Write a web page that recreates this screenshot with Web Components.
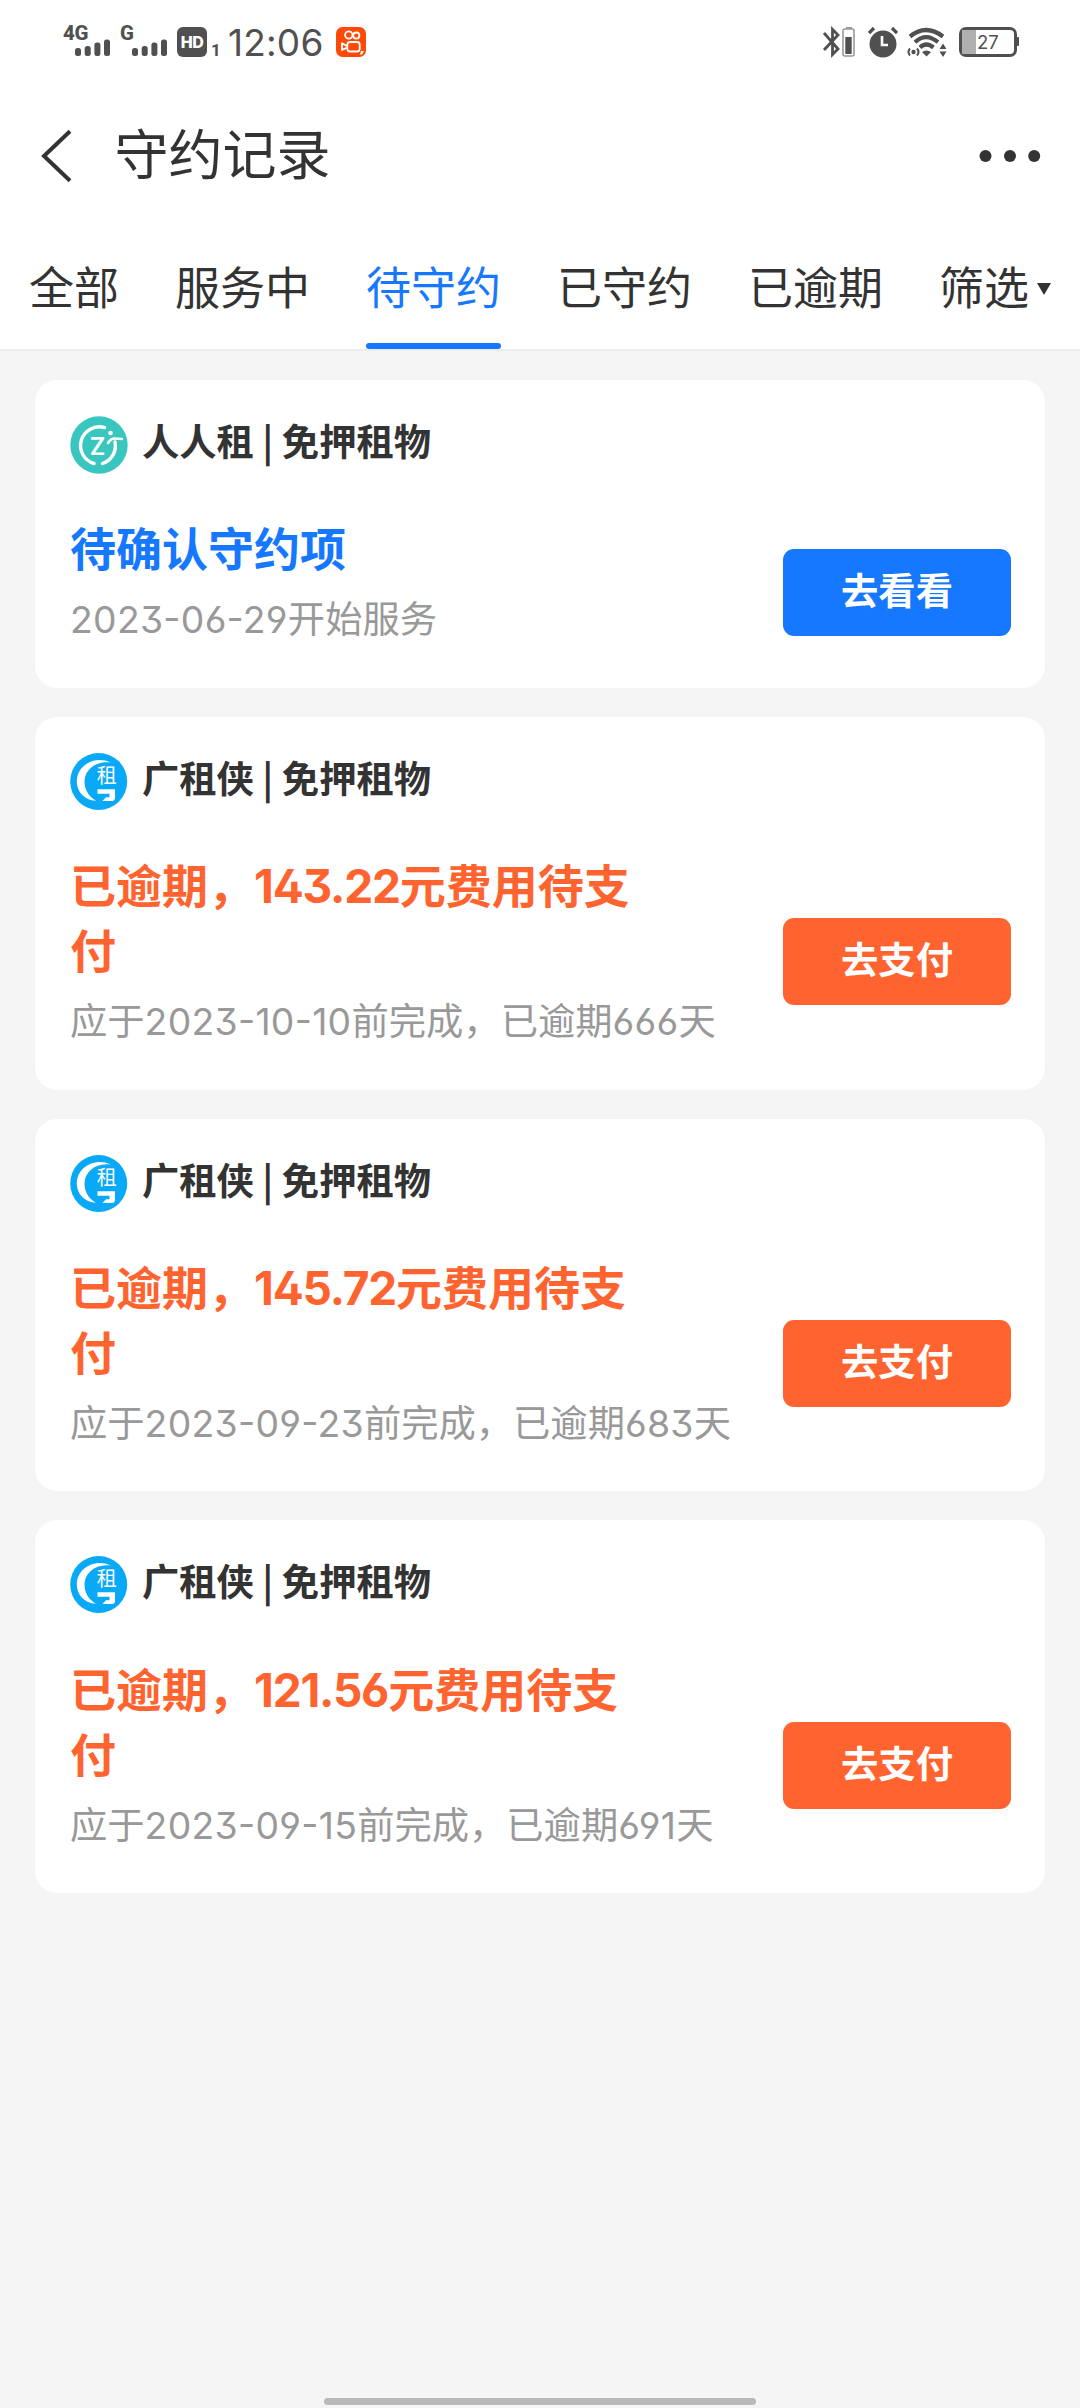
<!DOCTYPE html>
<html lang="zh-CN">
<head>
<meta charset="utf-8">
<title>守约记录</title>
<style>
html,body{margin:0;padding:0}
body{font-family:"Noto Sans CJK SC",sans-serif;color:#333;background:#f5f5f5}
</style>
</head>
<body>
<record-page>
  <phone-status slot="top"></phone-status>
  <nav-header slot="top">守约记录</nav-header>
  <tab-strip slot="top">
    <tab-item>全部</tab-item>
    <tab-item>服务中</tab-item>
    <tab-item active>待守约</tab-item>
    <tab-item>已守约</tab-item>
    <tab-item>已逾期</tab-item>
    <tab-item caret>筛选</tab-item>
  </tab-strip>
  <record-card tone="info" logo="rrz" status="待确认守约项" note="2023-06-29开始服务" action="去看看">人人租 | 免押租物</record-card>
  <record-card tone="late" logo="gzx" status="已逾期，143.22元费用待支付" note="应于2023-10-10前完成，已逾期666天" action="去支付">广租侠 | 免押租物</record-card>
  <record-card tone="late" logo="gzx" status="已逾期，145.72元费用待支付" note="应于2023-09-23前完成，已逾期683天" action="去支付">广租侠 | 免押租物</record-card>
  <record-card tone="late" logo="gzx" status="已逾期，121.56元费用待支付" note="应于2023-09-15前完成，已逾期691天" action="去支付">广租侠 | 免押租物</record-card>
</record-page>
<script>
const define = (name, html) => customElements.define(name, class extends HTMLElement {
  constructor() {
    super();
    this.attachShadow({ mode: 'open' }).innerHTML = html;
  }
});

define('record-page', `
<style>
:host{display:flex;flex-direction:column;width:1080px;height:2408px;background:#f5f5f5;overflow:hidden}
header{background:#fff;border-bottom:2px solid #ececec;height:349px;flex:none}
main{flex:1;display:flex;flex-direction:column;gap:29px;padding:29px 35px 0}
footer{flex:none;display:flex;justify-content:center;padding-bottom:3px}
footer i{width:432px;height:7px;border-radius:4px;background:#b9b9b9}
</style>
<header><slot name="top"></slot></header>
<main><slot></slot></main>
<footer><i></i></footer>`);

const bars = `<svg width="36" height="18" fill="#505050"><rect x="0" y="9" width="6" height="8" rx="2.5"/><rect x="9.7" y="7" width="6" height="10" rx="2.5"/><rect x="19.4" y="3.5" width="6" height="13.5" rx="2.5"/><rect x="29" y="0.5" width="6" height="16.5" rx="2.5"/></svg>`;

define('phone-status', `
<style>
:host{display:flex;justify-content:space-between;height:84px;box-sizing:border-box;padding:24px 61px 0 63px;color:#505050;font-family:Inter,"Noto Sans",sans-serif}
.side{display:flex;align-items:flex-start;height:36px}
svg{display:block;flex:none}
.sig{position:relative;width:47px;height:33px;display:flex;align-items:flex-end;padding-left:12px;box-sizing:border-box}
.sig+.sig{margin-left:10px}
.sig b{position:absolute;left:0;top:0;font:800 20.500px/18px Roboto,sans-serif;letter-spacing:-.3px}
.hd{width:30px;height:30px;border-radius:6px;background:#505050;color:#fff;font:800 16px/30px Inter,sans-serif;text-align:center;letter-spacing:-.4px;margin:3px 0 0 10px}
.one{font:700 17px/18px Roboto,sans-serif;margin:17px 0 0 4px;width:9px}
time{font-size:37px;line-height:36px;margin:1px 0 0 8px;width:108px;letter-spacing:.2px}
.ks{margin-top:3px}
.bat{position:relative;box-sizing:border-box;width:58px;height:30px;border:3px solid #505050;border-radius:7px;margin:3px 0 0 11px;display:flex;align-items:center;font-size:18.5px;line-height:24px}
.bat i{width:14px;height:24px;background:#b0b0b0;margin-right:1px}
.nub{width:2px;height:9px;background:#505050;border-radius:0 1px 1px 0;margin-top:13px}
</style>
<div class="side">
 <div class="sig"><b>4G</b>${bars}</div>
 <div class="sig"><b>G</b>${bars}</div>
 <div class="hd">HD</div><span class="one">1</span>
 <time>12:06</time>
 <svg class="ks" width="30" height="30" viewBox="0 0 30 30"><rect width="30" height="30" rx="6.5" fill="#fe4a08"/><g fill="none" stroke="#fff" stroke-width="1.8"><circle cx="12.8" cy="8" r="3.7"/><circle cx="20.3" cy="8.6" r="3.1"/><rect x="11.3" y="15" width="12.4" height="9.5" rx="2.8"/><path d="M11 19L6 16.2V23L11 20.6" stroke-linejoin="round"/></g><path d="M25 24h3l-2 3.5h-2z" fill="#fff"/></svg>
</div>
<div class="side">
 <svg width="34" height="36" viewBox="0 0 34 36"><path d="M2 9L16 25 10.5 30.5V5.500L16 11 2 26" fill="none" stroke="#505050" stroke-width="2.8"/><path d="M24 3h6v2h-6z" fill="#999"/><rect x="21" y="5" width="11" height="27" rx="2" fill="#fff" stroke="#999" stroke-width="1.6"/><rect x="23.3" y="13" width="6.4" height="17" fill="#505050"/></svg>
 <svg width="30" height="36" viewBox="0 0 30 36" style="margin-left:12px"><circle cx="15" cy="20" r="13.5" fill="#505050"/><path d="M14 12v9h6" fill="none" stroke="#fff" stroke-width="2.6"/><path d="M1 9l5-5M24 4l5 5" stroke="#505050" stroke-width="3.2"/></svg>
 <svg width="42" height="36" viewBox="0 0 42 36" style="margin-left:8px"><g fill="none" stroke="#505050" stroke-width="4.2"><path d="M4 12.5Q20 -.5 37 12.5"/><path d="M9 18.2Q20 8 32 18.2"/><path d="M14 23.5Q20 17.5 27.5 23.5"/></g><path d="M16 28q4.500-3 9 0l-4.500 4.500z" fill="#505050"/><circle cx="7.500" cy="28" r="2.200" fill="#505050"/><path d="M4 24.500q-3 3.500 0 7M11 24.500q3 3.500 0 7" fill="none" stroke="#505050" stroke-width="2"/><path d="M33.500 25l3.500-5.500 3.500 5.500zM33.500 27.500h7L37 33z" fill="#505050"/></svg>
 <div class="bat"><i></i>27</div><div class="nub"></div>
</div>`);

define('nav-header', `
<style>
:host{display:flex;align-items:center;height:144px;padding:0 39px 0 40px;font-size:54px;line-height:80px;color:#333}
.t{flex:1;margin:-8px 0 0 42.500px}
svg{flex:none}
</style>
<svg width="32" height="52" viewBox="0 0 32 52"><path d="M30 1.200L4 26 30 50.800" fill="none" stroke="#333" stroke-width="4"/></svg>
<div class="t"><slot></slot></div>
<svg width="62" height="14" viewBox="0 0 62 14" fill="#333"><circle cx="6.500" cy="7" r="6"/><circle cx="31" cy="7" r="6"/><circle cx="55.200" cy="7" r="6"/></svg>`);

define('tab-strip', `
<style>
:host{display:flex;gap:56px;height:121px;padding-left:29px}
</style><slot></slot>`);

define('tab-item', `
<style>
:host{display:flex;flex-direction:column;height:121px;font-size:45px;line-height:116px;color:#333;white-space:nowrap}
.r{display:flex;align-items:center;height:115px}
.u{height:6px;border-radius:3px}
:host([active]){color:#1677ff}
:host([active]) .u{background:#1677ff}
svg{display:none;margin:6px 0 0 8px}
:host([caret]) svg{display:block}
</style>
<div class="r"><slot></slot><svg width="14" height="12"><path d="M0 0h14L7 12z" fill="#333"/></svg></div><div class="u"></div>`);

const logos = {
  rrz: `<svg width="58" height="58" viewBox="0 0 58 58"><circle cx="29" cy="29" r="28.700" fill="#38c6be"/><g fill="none" stroke="#fff" stroke-width="3.400" stroke-linecap="round"><path d="M34.500 11.600A18.500 18.500 0 0 0 24 47.500"/><path d="M45 26A18.500 18.500 0 0 1 32.500 47.500"/><path d="M38 27Q41 22.500 44.500 22.500T52 23" stroke-width="2.600"/></g><circle cx="40.500" cy="17" r="2.300" fill="#fff"/><text x="27.500" y="38.500" text-anchor="middle" fill="#fff" font-family="Inter,sans-serif" font-weight="600" font-size="24">Z</text></svg>`,
  gzx: `<svg width="58" height="58" viewBox="0 0 58 58"><circle cx="28.700" cy="28.500" r="28.500" fill="#0aa9f7"/><path d="M41 9.500C25 2 6.800 12 6.800 28.500c0 10.500 7.500 18.500 19.200 19.300C18.500 43.500 14.300 36.500 14.500 28 15 17 25 7.500 41 9.500z" fill="#fff"/><text x="36.800" y="29.500" text-anchor="middle" fill="#fff" font-family="Noto Sans CJK SC,sans-serif" font-weight="400" font-size="20">租</text><path d="M27.500 36.300H45v8.500q0 3.200-3.200 3.200H32.500l3.500-3.800H39.500v-3.400H27.500z" fill="#fff"/></svg>`
};

/* Wraps digit runs so they use the numeral spacing and alternates. */
const digits = s => s.replace(/[\d.\-]+/g, '<span class="n">$&</span>');

class RecordCard extends HTMLElement {
  connectedCallback() {
    if (this.shadowRoot) return;
    const a = n => this.getAttribute(n);
    const status = a('status');
    this.attachShadow({ mode: 'open' }).innerHTML = `
<style>
:host{display:block;background:#fff;border-radius:22px;padding:36px 34px 19px 35px;--tone:#1677ff}
:host([tone=late]){--tone:#ff6430}
.h{display:flex;align-items:flex-start;height:58px;gap:14px;font-weight:700;font-size:37.300px;line-height:49.500px;white-space:pre}
.h svg{flex:none}
.b{display:flex;align-items:center;margin-top:42.300px;font-family:Inter,"Noto Sans CJK SC",sans-serif}
.l{flex:1;min-width:0;padding:1px 0 23.700px}
.s{width:590px;font-size:46px;line-height:65.330px;font-weight:700;color:var(--tone)}
.d{margin-top:12.300px;font-size:37.300px;line-height:50px;color:#999;white-space:nowrap}
.n{font-feature-settings:"ss01","case"}
.d .n{letter-spacing:.3px}
.s .n{letter-spacing:-1.200px;font-weight:650}
button{all:unset;flex:none;width:228px;height:87px;border-radius:11px;background:var(--tone);color:#fff;font-family:"Noto Sans CJK SC",sans-serif;font-weight:700;font-size:37.300px;line-height:81px;box-sizing:border-box;padding-bottom:6px;text-align:center;margin-left:-60px}
</style>
<div class="h">${logos[a('logo')]}<span><slot></slot></span></div>
<div class="b"><div class="l"><div class="s">${digits(status.slice(0, -1))}<span>${status.slice(-1)}</span></div><div class="d">${digits(a('note'))}</div></div><button>${a('action')}</button></div>`;
  }
}
customElements.define('record-card', RecordCard);
</script>
</body>
</html>
